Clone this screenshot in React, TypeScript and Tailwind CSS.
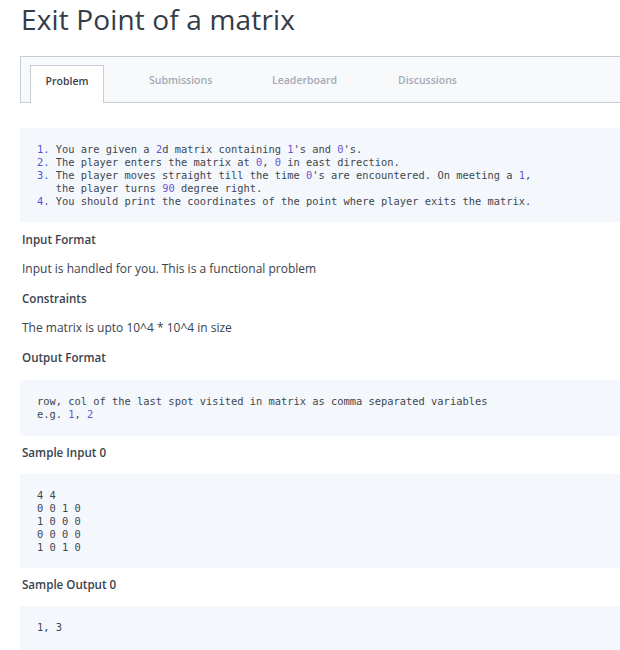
import React from "react";

const N = ({ children }: { children: React.ReactNode }) => (
  <span className="text-[#6f52d6]">{children}</span>
);
const M = ({ children }: { children: React.ReactNode }) => (
  <span className="text-[#5353d0]">{children}</span>
);

const Heading = ({ children, className = "" }: { children: React.ReactNode; className?: string }) => (
  <div className={"pl-[22px] text-[11.6px] leading-[18px] font-semibold text-[#39424e] " + className}>{children}</div>
);

const Body = ({ children, className = "" }: { children: React.ReactNode; className?: string }) => (
  <div className={"pl-[22px] text-[12px] leading-[18px] text-[#39424e] " + className}>{children}</div>
);

const Code = ({ children, className = "" }: { children: React.ReactNode; className?: string }) => (
  <div
    className={
      "ml-[20px] bg-[#f4f8fd] pl-[17px] pt-[15px] whitespace-pre text-[10.4px] leading-[13px] text-[#41464d] " +
      className
    }
    style={{ fontFamily: '"DejaVu Sans Mono", "Liberation Mono", monospace' }}
  >
    {children}
  </div>
);

export default function App() {
  return (
    <div
      className="w-[620px] h-[650px] overflow-hidden bg-white"
      style={{ fontFamily: '"Open Sans", "Noto Sans", sans-serif' }}
    >
      <h1 className="pl-[21px] text-[28px] leading-[38px] font-normal tracking-[0.15px] text-[#333c47]">Exit Point of a matrix</h1>

      <div className="ml-[20px] mt-[18px] h-[47px] border-l border-y border-[#c9ccd6] bg-[#f8f9fb] pl-[9px] pt-[8px] flex items-stretch text-[10.5px] leading-[16px] font-semibold">
        <div className="w-[74px] -mb-px bg-white border-x border-t border-[#c9ccd6] flex justify-center pt-[7px] text-[#39424e]">
          Problem
        </div>
        <div className="ml-[45px] w-[123px] pt-[7px] text-[#a3a9b6]">Submissions</div>
        <div className="w-[126px] pt-[7px] text-[#a3a9b6]">Leaderboard</div>
        <div className="pt-[7px] text-[#a3a9b6]">Discussions</div>
      </div>

      <Code className="mt-[25px] pb-[14px]">
        <M>1.</M> You are given a <N>2</N>d matrix containing <N>1</N>'s and <N>0</N>'s.{"\n"}
        <M>2.</M> The player enters the matrix at <N>0</N>, <N>0</N> in east direction.{"\n"}
        <M>3.</M> The player moves straight till the time <N>0</N>'s are encountered. On meeting a <N>1</N>,{"\n"}
        {"   "}the player turns <N>90</N> degree right.{"\n"}
        <M>4.</M> You should print the coordinates of the point where player exits the matrix.
      </Code>

      <Heading className="mt-[9px]">Input Format</Heading>
      <Body className="mt-[11px]">Input is handled for you. This is a functional problem</Body>

      <Heading className="mt-[12px]">Constraints</Heading>
      <Body className="mt-[11px]">The matrix is upto 10^4 * 10^4 in size</Body>

      <Heading className="mt-[12px]">Output Format</Heading>
      <Code className="mt-[13px] pb-[15px]">
        row, col of the last spot visited in matrix as comma separated variables{"\n"}
        e.g. <N>1</N>, <N>2</N>
      </Code>

      <Heading className="mt-[8px]">Sample Input 0</Heading>
      <Code className="mt-[12px] pb-[14px]">
        {"4 4\n0 0 1 0\n1 0 0 0\n0 0 0 0\n1 0 1 0"}
      </Code>

      <Heading className="mt-[8px]">Sample Output 0</Heading>
      <Code className="mt-[12px] pb-[14px]">{"1, 3\n\n"}</Code>
    </div>
  );
}
